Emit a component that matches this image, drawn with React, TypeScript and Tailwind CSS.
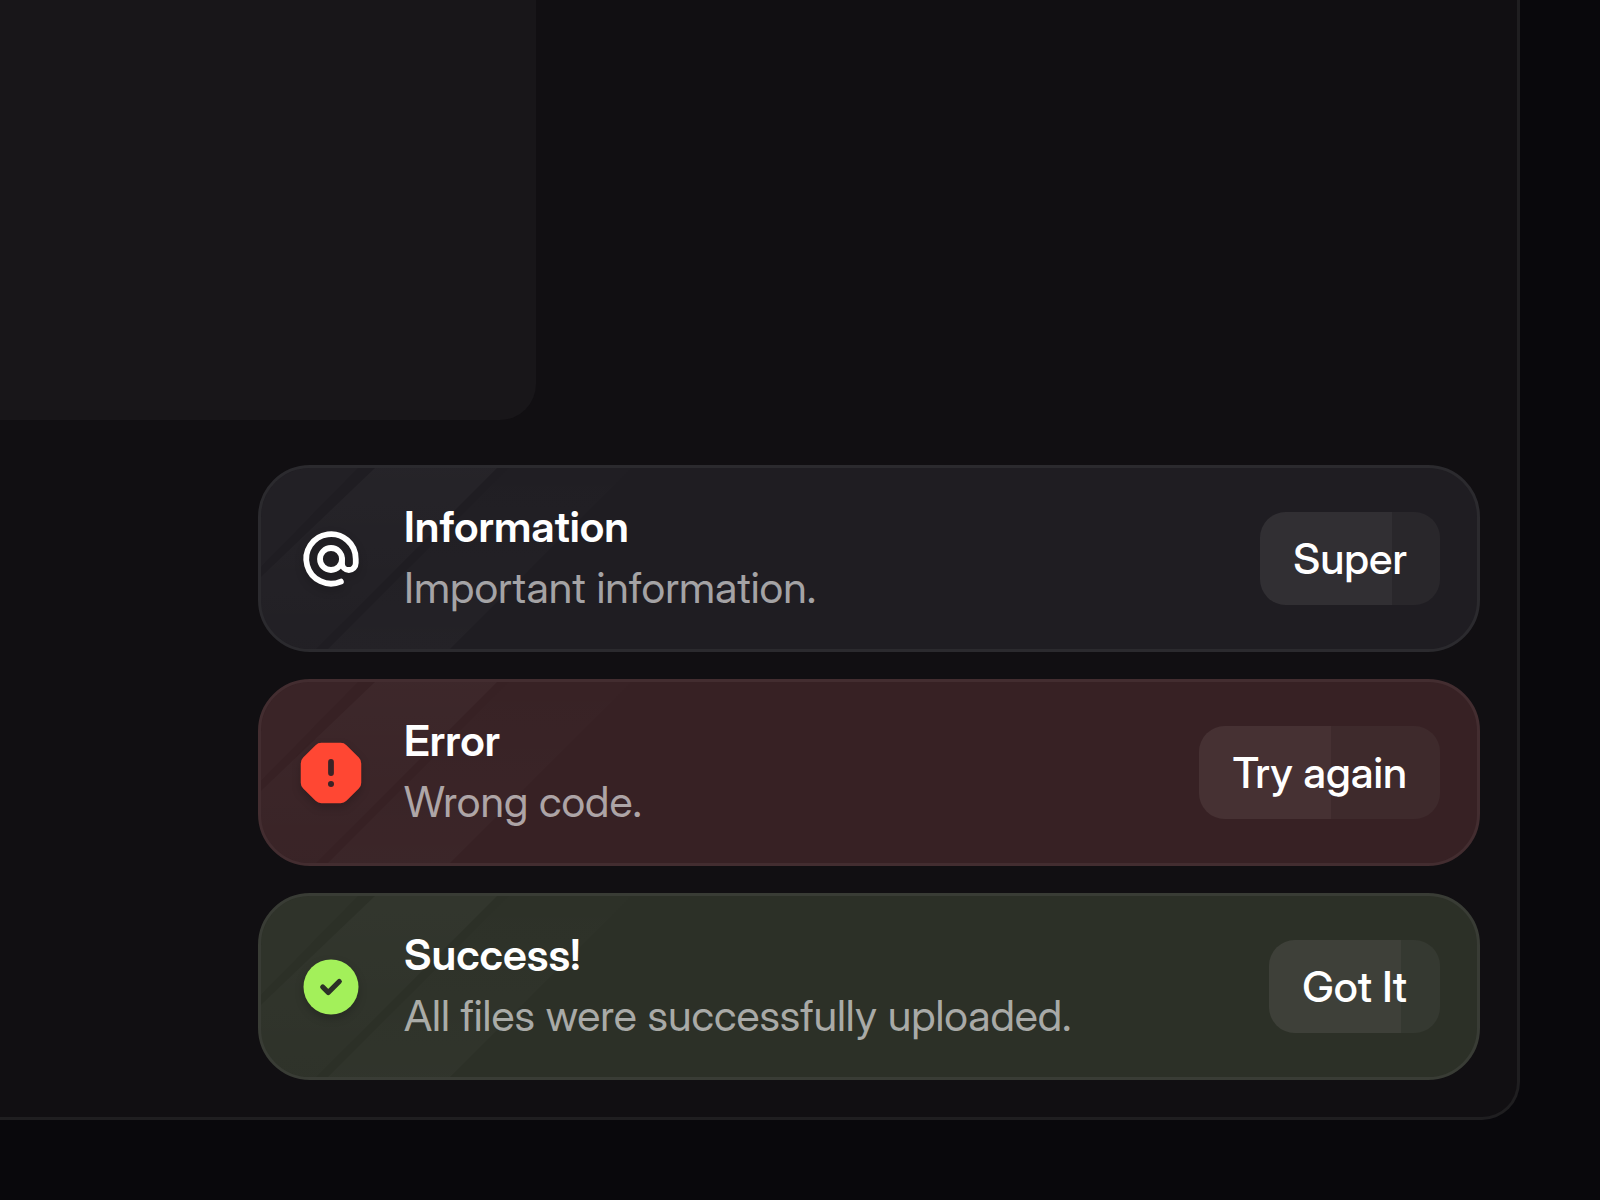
type Tone = "info" | "error" | "success";

type ToastProps = {
  tone: Tone;
  title: string;
  text: string;
  action: string;
};

const tones: Record<Tone, string> = {
  info: "bg-[#1f1d22] border-[#2b2a2e]",
  error: "bg-[#372124] border-[#432d30]",
  success: "bg-[#2c3027] border-[#393c35]",
};

const fills: Record<Tone, string> = {
  info: "bg-[linear-gradient(to_right,#312f33_132px,#29272b_132px)]",
  error: "bg-[linear-gradient(to_right,#463133_132px,#3e2a2c_132px)]",
  success: "bg-[linear-gradient(to_right,#3e4039_132px,#353931_132px)]",
};

const AtIcon = () => (
  <g fill="none" stroke="#fff" strokeWidth="2.1" strokeLinecap="round">
    <circle cx="12" cy="12" r="4" />
    <path d="M16 12v1.5a2.5 2.5 0 0 0 5 0V12a9 9 0 1 0-5.4 8.2" />
  </g>
);

const ErrorIcon = ({ ink }: { ink: string }) => (
  <>
    <path
      fill="#ff4733"
      d="M8.5 1h7a3 3 0 0 1 2.12.88l4.5 4.5A3 3 0 0 1 23 8.5v7a3 3 0 0 1-.88 2.12l-4.5 4.5A3 3 0 0 1 15.5 23h-7a3 3 0 0 1-2.12-.88l-4.5-4.5A3 3 0 0 1 1 15.5v-7a3 3 0 0 1 .88-2.12l4.5-4.5A3 3 0 0 1 8.5 1Z"
    />
    <path d="M12 8v4" stroke={ink} strokeWidth="2.1" strokeLinecap="round" />
    <circle cx="12" cy="16" r="1.1" fill={ink} />
  </>
);

const SuccessIcon = ({ ink }: { ink: string }) => (
  <>
    <circle cx="12" cy="12" r="10" fill="#a3f05a" />
    <path
      d="m9 12 2 2 4-4"
      fill="none"
      stroke={ink}
      strokeWidth="1.9"
      strokeLinecap="round"
      strokeLinejoin="round"
    />
  </>
);

// diagonal glare over the left side
const Glare = ({ tone }: { tone: Tone }) => (
  <svg
    aria-hidden="true"
    className="absolute left-0 top-0 -z-10 h-[181px] w-[520px]"
    viewBox="0 0 520 181"
  >
    <defs>
      <linearGradient id={`${tone}-top`} x1="0" y1="0" x2="0" y2="1">
        <stop offset="0" stopColor="#fff" stopOpacity=".03" />
        <stop offset="1" stopColor="#fff" stopOpacity=".012" />
      </linearGradient>
      <linearGradient id={`${tone}-bottom`} x1="0" y1="0" x2="0" y2="1">
        <stop offset="0" stopColor="#fff" stopOpacity=".005" />
        <stop offset="1" stopColor="#fff" stopOpacity=".022" />
      </linearGradient>
    </defs>
    <path d="M0 0H97L0 99Z" fill="#fff" opacity=".014" />
    <path d="M114 0H236L55 181H0V109Z" fill={`url(#${tone}-top)`} />
    <path d="M248 0H370L189 181H67Z" fill={`url(#${tone}-bottom)`} />
    <path d="M379 0H499L318 181H198Z" fill="#fff" opacity=".005" />
  </svg>
);

const Toast = ({ tone, title, text, action }: ToastProps) => {
  return (
    <div
      role="status"
      className={`relative isolate flex items-center gap-10 overflow-hidden rounded-[52px] border-[3px] px-[37px] py-7 ${tones[tone]}`}
    >
      <Glare tone={tone} />
      <svg
        aria-hidden="true"
        viewBox="0 0 24 24"
        className="size-[66px] shrink-0 drop-shadow-[0_4px_4px_rgba(0,0,0,0.2)]"
      >
        {tone === "info" && <AtIcon />}
        {tone === "error" && <ErrorIcon ink="#3b2326" />}
        {tone === "success" && <SuccessIcon ink="#2c3127" />}
      </svg>
      <div className="min-w-0 flex-1 pb-[3px] text-[43px] leading-[61px]">
        <p className="font-semibold text-white">{title}</p>
        <p className="text-white/60">{text}</p>
      </div>
      <button
        type="button"
        className={`h-[93px] shrink-0 rounded-[26px] px-[33px] text-[43px] font-medium text-white ${fills[tone]}`}
      >
        {action}
      </button>
    </div>
  );
};

export default function App() {
  return (
    <div className="min-h-screen overflow-hidden bg-[#09080c] pr-20 pb-20 font-['Inter_Display','Inter',sans-serif] [font-variation-settings:'opsz'_32]">
      <main className="rounded-br-[38px] border-r-[3px] border-b-[3px] border-[#1f1e20] bg-[#110f12] pb-[37px]">
        <section className="h-[420px] w-[536px] rounded-br-[36px] bg-[#181619]" />
        <div className="mt-[45px] mr-[37px] ml-[258px] flex flex-col gap-[27px]">
          <Toast
            tone="info"
            title="Information"
            text="Important information."
            action="Super"
          />
          <Toast
            tone="error"
            title="Error"
            text="Wrong code."
            action="Try again"
          />
          <Toast
            tone="success"
            title="Success!"
            text="All files were successfully uploaded."
            action="Got It"
          />
        </div>
      </main>
    </div>
  );
}
